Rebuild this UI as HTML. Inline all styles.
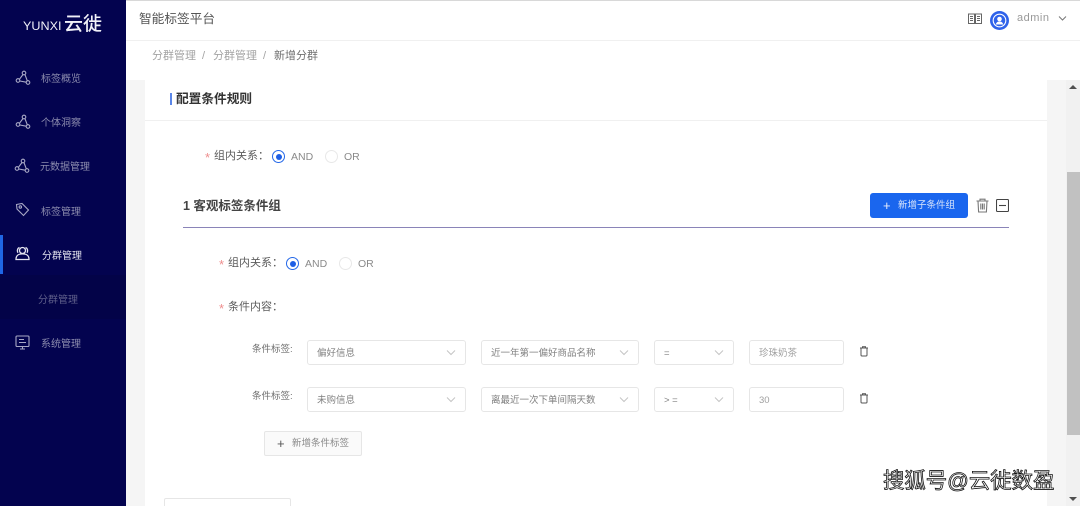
<!DOCTYPE html>
<html lang="zh"><head><meta charset="utf-8"><title>智能标签平台</title>
<style>
*{box-sizing:border-box;margin:0;padding:0}
html,body{width:1080px;height:506px;overflow:hidden;background:#fff}
body{position:relative;font-family:"Liberation Sans","Noto Sans CJK SC",sans-serif;color:#555}
#w{position:absolute;left:0;top:0;width:1080px;height:506px;filter:blur(.3px)}
.a{position:absolute;white-space:nowrap;line-height:1}
.side{position:absolute;left:0;top:0;width:126px;height:506px;background:#03034f}
.m{position:absolute;font-size:10px;color:#8c8cae;line-height:1;white-space:nowrap}
.ic{position:absolute;fill:none;stroke:#a9a9c6;stroke-width:1.1}
.req{color:#ee8d8d;font-size:13px}
.lab{font-size:11px;color:#5c5c5c}
.radio{position:absolute;width:13px;height:13px;border-radius:50%;border:1px solid #2468e8;background:#fff}
.radio:after{content:"";position:absolute;left:2.5px;top:2.5px;width:6px;height:6px;border-radius:50%;background:#1d5fe6}
.off{position:absolute;width:13px;height:13px;border-radius:50%;border:1px solid #e8e8e8;background:#fff}
.rt{font-size:10.5px;color:#8a8a8a}
.box{position:absolute;height:25px;border:1px solid #e6e6e6;border-radius:3px;background:#fff;font-size:9.5px;color:#808080;line-height:25px;padding-left:9px;white-space:nowrap}
.box svg{position:absolute;right:9px;top:8px;fill:none;stroke:#c4c4c4;stroke-width:1}
.sm{font-size:9.5px;color:#6e6e6e}
.bc{font-size:11px;color:#a3a3a3;top:51px}
</style></head><body><div id="w">
<div class="a" style="left:0;top:0;width:1080px;height:1px;background:#d8d8d8"></div>
<div class="a" style="left:126px;top:40px;width:954px;height:1px;background:#f0f0f0"></div>
<div class="a" style="left:126px;top:80px;width:954px;height:426px;background:#f5f5f5"></div>
<div class="a" style="left:145px;top:80px;width:902px;height:426px;background:#fff"></div>
<div class="a" style="left:145px;top:120px;width:902px;height:1px;background:#f0f0f0"></div>
<div class="a" style="left:1066px;top:80px;width:14px;height:426px;background:#f1f1f1"></div>
<div class="a" style="left:1067px;top:172px;width:13px;height:263px;background:#c1c1c1"></div>
<div class="a" style="left:1069px;top:85px;border-left:4px solid transparent;border-right:4px solid transparent;border-bottom:4px solid #505050"></div>
<div class="a" style="left:1069px;top:497px;border-left:4px solid transparent;border-right:4px solid transparent;border-top:4px solid #505050"></div>

<div class="side"></div>
<div class="a" style="left:23px;top:20px;font-size:12px;letter-spacing:0;color:#f0f0f8;transform:scaleX(1.05);transform-origin:left">YUNXI</div>
<div class="a" style="left:64px;top:15px;font-size:19px;color:#f0f0f8;font-weight:500">云徙</div>

<svg class="ic" style="left:15px;top:70px" width="16" height="16" viewBox="0 0 16 16"><circle cx="3" cy="10.500" r="1.800"/><circle cx="9" cy="3" r="1.800"/><circle cx="13" cy="12.500" r="1.800"/><path d="M4.500 9.200 8 4.500M10 4.700 12.300 10.800M4.800 11 11.200 12.200"/></svg>
<div class="m" style="left:41px;top:75px">标签概览</div>
<svg class="ic" style="left:15px;top:114px" width="16" height="16" viewBox="0 0 16 16"><circle cx="3" cy="10.500" r="1.800"/><circle cx="9" cy="3" r="1.800"/><circle cx="13" cy="12.500" r="1.800"/><path d="M4.500 9.200 8 4.500M10 4.700 12.300 10.800M4.800 11 11.200 12.200"/></svg>
<div class="m" style="left:41px;top:119px">个体洞察</div>
<svg class="ic" style="left:14px;top:158px" width="16" height="16" viewBox="0 0 16 16"><circle cx="3" cy="10.500" r="1.800"/><circle cx="9" cy="3" r="1.800"/><circle cx="13" cy="12.500" r="1.800"/><path d="M4.500 9.200 8 4.500M10 4.700 12.300 10.800M4.800 11 11.200 12.200"/></svg>
<div class="m" style="left:40px;top:163px">元数据管理</div>
<svg class="ic" style="left:15px;top:202px" width="15" height="15" viewBox="0 0 15 15"><path d="M1.500 2.500 7 1.500 13.500 8 8.500 13.500 2 7z"/><circle cx="5.300" cy="5" r="1.200"/></svg>
<div class="m" style="left:41px;top:208px">标签管理</div>

<div class="a" style="left:0;top:235px;width:3px;height:39px;background:#1f66e5"></div>
<svg class="ic" style="left:15px;top:246px;stroke:#e4e4f0;stroke-width:1.300" width="15" height="15" viewBox="0 0 15 15"><circle cx="7.500" cy="4.500" r="3"/><path d="M1 13.500c0-4 2-5.600 6.500-5.600s6.500 1.600 6.500 5.600zM4.500 1.500C2.500 2 1.800 5 3 6.700M10.500 1.500c2 .5 2.700 3.500 1.500 5.200"/></svg>
<div class="m" style="left:42px;top:252px;color:#e2e2ee">分群管理</div>
<div class="a" style="left:0;top:275px;width:126px;height:44px;background:#030348"></div>
<div class="m" style="left:38px;top:296px;color:#5f5f8a">分群管理</div>
<svg class="ic" style="left:15px;top:335px" width="15" height="16" viewBox="0 0 15 16"><rect x="1" y="1" width="13" height="10.500" rx="1"/><path d="M4 4.500h5M4 7.500h7M5 14h5M7.500 11.500V14"/></svg>
<div class="m" style="left:41px;top:340px">系统管理</div>

<div class="a" style="left:139px;top:13px;font-size:12.700px;color:#555">智能标签平台</div>
<svg class="a" style="left:968px;top:13px;fill:none;stroke:#666;stroke-width:1" width="14" height="12" viewBox="0 0 14 12"><path d="M.5 1h6v9.500h-6zM7.500 1h6v9.500h-6zM2 3.500h3M2 5.500h3M2 7.500h3M9 3.500h3M9 5.500h3M9 7.500h3"/></svg>
<svg class="a" style="left:990px;top:11px" width="19" height="19" viewBox="0 0 19 19"><circle cx="9.500" cy="9.500" r="9.500" fill="#2e62ea"/><circle cx="9.500" cy="9.500" r="6.300" fill="none" stroke="#fff" stroke-width="1.100"/><circle cx="9.500" cy="8" r="2.300" fill="#fff"/><path d="M5.800 13.500c.6-2.500 2-3 3.700-3s3.100.5 3.700 3z" fill="#fff"/></svg>
<div class="a" style="left:1017px;top:13px;font-size:11px;letter-spacing:.5px;color:#999">admin</div>
<svg class="a" style="left:1058px;top:15px;fill:none;stroke:#777;stroke-width:1" width="9" height="7" viewBox="0 0 9 7"><path d="M1 1.500 4.500 5 8 1.500"/></svg>

<div class="a bc" style="left:152px">分群管理</div>
<div class="a bc" style="left:202px">/</div>
<div class="a bc" style="left:213px">分群管理</div>
<div class="a bc" style="left:263px">/</div>
<div class="a bc" style="left:274px;color:#707070">新增分群</div>

<div class="a" style="left:170px;top:93px;width:2px;height:12px;background:#5a86e8"></div>
<div class="a" style="left:176px;top:93px;font-size:12.700px;font-weight:700;color:#333">配置条件规则</div>

<div class="a req" style="left:205px;top:151px">*</div>
<div class="a lab" style="left:214px;top:151px">组内关系：</div>
<div class="radio" style="left:272px;top:150px"></div><div class="a rt" style="left:291px;top:152px">AND</div>
<div class="off" style="left:325px;top:150px"></div><div class="a rt" style="left:344px;top:152px">OR</div>

<div class="a" style="left:183px;top:200px;font-size:12.500px;font-weight:700;color:#444">1 客观标签条件组</div>
<div class="a" style="left:870px;top:193px;width:98px;height:25px;background:#1a66ee;border-radius:3px"></div>
<div class="a" style="left:883px;top:199px;font-size:13px;color:#e8eefc">+</div>
<div class="a" style="left:898px;top:201px;font-size:9.500px;color:#d8e4fb">新增子条件组</div>
<svg class="a" style="left:976px;top:198px;fill:none;stroke:#777;stroke-width:1.100" width="13" height="15" viewBox="0 0 13 15"><path d="M.5 3h12M4 3V1.200h5V3M2 3l.6 11h7.800L11 3M4.800 5.500v6M6.500 5.500v6M8.200 5.500v6"/></svg>
<svg class="a" style="left:996px;top:199px;fill:none;stroke:#444;stroke-width:1.100" width="13" height="13" viewBox="0 0 13 13"><rect x=".5" y=".5" width="12" height="12" rx="1"/><path d="M3 6.500h7"/></svg>
<div class="a" style="left:183px;top:227px;width:826px;height:1px;background:#8a84b8"></div>

<div class="a req" style="left:219px;top:258px">*</div>
<div class="a lab" style="left:228px;top:258px">组内关系：</div>
<div class="radio" style="left:286px;top:257px"></div><div class="a rt" style="left:305px;top:259px">AND</div>
<div class="off" style="left:339px;top:257px"></div><div class="a rt" style="left:358px;top:259px">OR</div>
<div class="a req" style="left:219px;top:302px">*</div>
<div class="a lab" style="left:228px;top:302px">条件内容：</div>

<div class="a sm" style="left:252px;top:345px">条件标签:</div>
<div class="box" style="left:307px;top:340px;width:159px">偏好信息<svg width="10" height="7" viewBox="0 0 10 7"><path d="M1 1.500 5 5.500l4-4"/></svg></div>
<div class="box" style="left:481px;top:340px;width:158px">近一年第一偏好商品名称<svg width="10" height="7" viewBox="0 0 10 7"><path d="M1 1.500 5 5.500l4-4"/></svg></div>
<div class="box" style="left:654px;top:340px;width:80px">=<svg width="10" height="7" viewBox="0 0 10 7"><path d="M1 1.500 5 5.500l4-4"/></svg></div>
<div class="box" style="left:749px;top:340px;width:95px;color:#a0a0a0">珍珠奶茶</div>
<svg class="a" style="left:859px;top:346px;fill:none;stroke:#555;stroke-width:1" width="10" height="11" viewBox="0 0 10 11"><path d="M1 2h8M3.500 2V.8h3V2M2 2v7a1 1 0 0 0 1 1h4a1 1 0 0 0 1-1V2"/></svg>

<div class="a sm" style="left:252px;top:392px">条件标签:</div>
<div class="box" style="left:307px;top:387px;width:159px">未购信息<svg width="10" height="7" viewBox="0 0 10 7"><path d="M1 1.500 5 5.500l4-4"/></svg></div>
<div class="box" style="left:481px;top:387px;width:158px">离最近一次下单间隔天数<svg width="10" height="7" viewBox="0 0 10 7"><path d="M1 1.500 5 5.500l4-4"/></svg></div>
<div class="box" style="left:654px;top:387px;width:80px">&gt; =<svg width="10" height="7" viewBox="0 0 10 7"><path d="M1 1.500 5 5.500l4-4"/></svg></div>
<div class="box" style="left:749px;top:387px;width:95px;color:#a0a0a0">30</div>
<svg class="a" style="left:859px;top:393px;fill:none;stroke:#555;stroke-width:1" width="10" height="11" viewBox="0 0 10 11"><path d="M1 2h8M3.500 2V.8h3V2M2 2v7a1 1 0 0 0 1 1h4a1 1 0 0 0 1-1V2"/></svg>

<div class="a" style="left:264px;top:431px;width:98px;height:25px;border:1px solid #e6e6e6;border-radius:2px;background:#fafafa"></div>
<div class="a" style="left:277px;top:437px;font-size:13px;color:#555">+</div>
<div class="a" style="left:292px;top:439px;font-size:9.500px;color:#8a8a8a">新增条件标签</div>
<div class="a" style="left:164px;top:498px;width:127px;height:12px;border:1px solid #e6e6e6;border-radius:2px;background:#fff"></div>
</div>
<div class="a" style="left:883px;top:471px;font-size:21.400px;color:#fff;-webkit-text-stroke:.8px #111;font-weight:400">搜狐号@云徙数盈</div>
</body></html>
